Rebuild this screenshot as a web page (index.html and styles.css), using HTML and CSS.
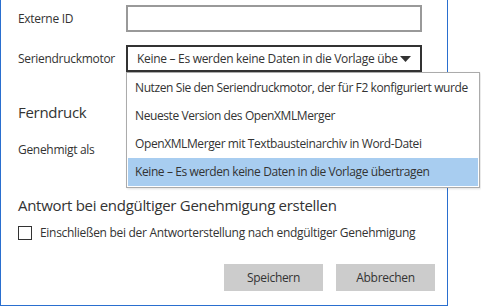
FILE: index.html
```html
<!DOCTYPE html>
<html lang="de">
<head>
    <meta charset="UTF-8">
    <title>Einstellungen</title>
    <link rel="stylesheet" href="styles.css">
</head>
<body>
    <div class="dialog">
        <div class="field-row first">
            <label class="field-label">Externe ID</label>
            <div class="text-input"></div>
        </div>
        <div class="field-row">
            <label class="field-label">Seriendruckmotor</label>
            <div class="select-wrap">
                <div class="select open">
                    <span class="select-value">Keine – Es werden keine Daten in die Vorlage übe</span>
                    <svg class="select-arrow" width="11" height="6" viewBox="0 0 11 6"><path d="M0 0h11L5.5 6z" fill="#333"/></svg>
                </div>
                <ul class="dropdown">
                    <li>Nutzen Sie den Seriendruckmotor, der für F2 konfiguriert wurde</li>
                    <li>Neueste Version des OpenXMLMerger</li>
                    <li>OpenXMLMerger mit Textbausteinarchiv in Word-Datei</li>
                    <li class="selected">Keine – Es werden keine Daten in die Vorlage übertragen</li>
                </ul>
            </div>
        </div>
        <h2 class="section-title ferndruck">Ferndruck</h2>
        <div class="field-row plain">
            <label class="field-label">Genehmigt als</label>
        </div>
        <h2 class="section-title answer">Antwort bei endgültiger Genehmigung erstellen</h2>
        <label class="check-row">
            <span class="checkbox"></span>
            Einschließen bei der Antworterstellung nach endgültiger Genehmigung
        </label>
        <div class="buttons">
            <button class="btn">Speichern</button>
            <button class="btn">Abbrechen</button>
        </div>
    </div>
</body>
</html>
```

FILE: styles.css
```css
body {
    margin: 0;
    background-color: #ffffff;
    font-family: "Open Sans", "Noto Sans", sans-serif;
    font-size: 12px;
    color: #333;
}
.dialog {
    width: 448px;
    height: 306px;
    border: 1px solid #2a6fcf;
    border-top: none;
    padding-top: 5px;
    padding-left: 17px;
    box-sizing: border-box;
}
.field-row {
    display: grid;
    grid-template-columns: 108px 296px;
    align-items: center;
    margin-bottom: 13px;
}
.field-label {
    letter-spacing: -0.3px;
}
.text-input {
    height: 27px;
    border: 2px solid #999;
    box-sizing: border-box;
}
.select-wrap {
    position: relative;
}
.select {
    height: 27px;
    border: 2px solid #333;
    box-sizing: border-box;
    display: flex;
    align-items: center;
    justify-content: space-between;
    padding: 0 9px;
}
.select-value {
    letter-spacing: -0.3px;
    white-space: nowrap;
}
.dropdown {
    position: absolute;
    top: 27px;
    left: 0;
    width: 354px;
    margin: 0;
    padding: 1px;
    list-style: none;
    background-color: #ffffff;
    border: 1px solid #ababab;
    box-sizing: border-box;
    box-shadow: 1px 1px 2px rgba(0, 0, 0, 0.12);
    z-index: 2;
}
.dropdown li {
    height: 28px;
    line-height: 28px;
    padding-left: 7px;
    letter-spacing: -0.4px;
    white-space: nowrap;
}
.dropdown li.selected {
    background-color: #a8cdf0;
}
.section-title {
    font-size: 15px;
    font-weight: normal;
    margin: 0;
    letter-spacing: -0.3px;
}
.ferndruck {
    margin-top: 30px;
}
.plain {
    height: 27px;
    margin-top: 14px;
}
.answer {
    margin-top: 32px;
}
.check-row {
    display: flex;
    align-items: center;
    gap: 8px;
    margin-top: 9px;
    letter-spacing: -0.3px;
}
.checkbox {
    width: 14px;
    height: 14px;
    border: 1px solid #333;
    box-sizing: border-box;
}
.buttons {
    display: flex;
    gap: 13px;
    margin-top: 23px;
    padding-left: 206px;
}
.btn {
    width: 99px;
    height: 27px;
    border: none;
    background-color: #cccccc;
    font-family: inherit;
    font-size: 12px;
    color: #333;
    letter-spacing: -0.3px;
}
```
